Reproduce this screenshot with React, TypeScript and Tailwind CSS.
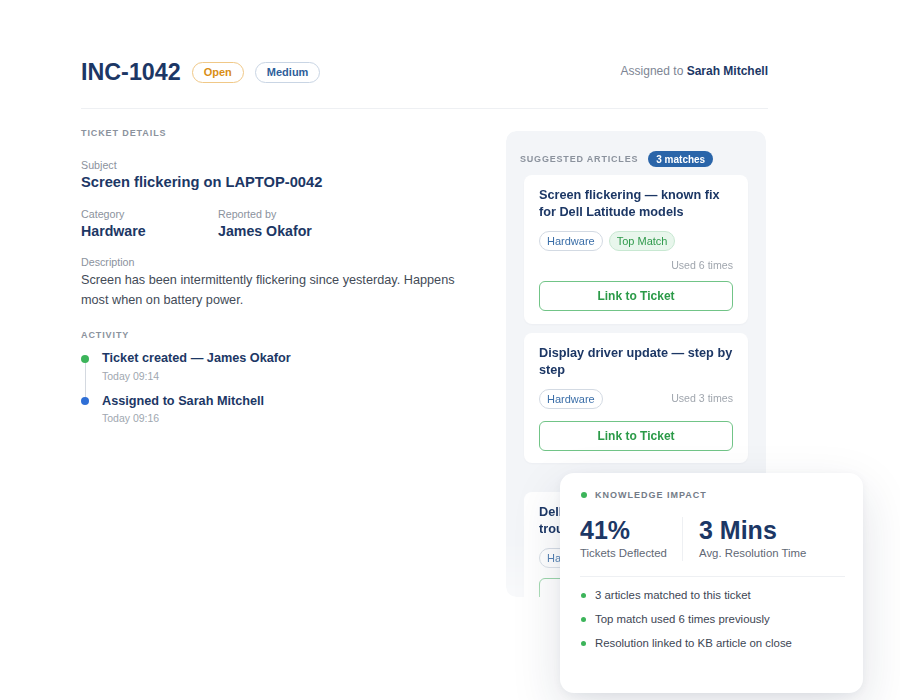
import React from "react";

const NAVY = "text-[#1c3765]";

function Label({ children }: { children: React.ReactNode }) {
  return <div className="text-[10.7px] leading-[14px] text-[#8b929d]">{children}</div>;
}

function Tag({ children, green }: { children: React.ReactNode; green?: boolean }) {
  return (
    <span
      className={
        "inline-flex h-[20px] items-center rounded-full border px-[7px] text-[11px] " +
        (green
          ? "border-[#c8e8d2] bg-[#e8f6ec] text-[#2f9a4c]"
          : "border-[#d3dae3] bg-white text-[#3a6ea8]")
      }
    >
      {children}
    </span>
  );
}

function LinkButton() {
  return (
    <div className="flex h-[30px] items-center justify-center rounded-[6px] border border-[#71c487] text-[12px] font-bold text-[#2b9a48]">
      Link to Ticket
    </div>
  );
}

export default function App() {
  return (
    <div
      className="relative h-[700px] w-[900px] overflow-hidden bg-white"
      style={{ fontFamily: '"Liberation Sans", Arial, Helvetica, sans-serif' }}
    >
      <div className="relative ml-[81px] w-[687px] pt-[58px]">
        {/* Header */}
        <div className="flex h-[29px] items-center justify-between">
          <div className="flex items-center gap-[11px]">
            <div className={"text-[23.3px] font-bold leading-[29px] " + NAVY}>INC-1042</div>
            <span className="inline-flex h-[21px] items-center rounded-full border border-[#f0c887] px-[11px] text-[11px] font-bold text-[#d98e14]">
              Open
            </span>
            <span className="inline-flex h-[21px] items-center rounded-full border border-[#c9d5e4] px-[11px] text-[11px] font-bold text-[#2d5e9a]">
              Medium
            </span>
          </div>
          <div className="mb-[4px] text-[12px] text-[#7d8594]">
            Assigned to <span className={"font-bold " + NAVY}>Sarah Mitchell</span>
          </div>
        </div>
        <div className="mt-[21px] border-t border-[#eef0f3]" />

        {/* Body */}
        <div className="flex gap-[34px]">
          <div className="flex-1 pt-[18px]">
            <div className="text-[9px] font-bold uppercase leading-[12px] tracking-[0.1em] text-[#8b929d]">
              Ticket Details
            </div>
            <div className="mt-[19px]">
              <Label>Subject</Label>
              <div className={"text-[14.7px] font-bold leading-[20px] " + NAVY}>
                Screen flickering on LAPTOP-0042
              </div>
            </div>
            <div className="mt-[15px] flex">
              <div className="w-[137px]">
                <Label>Category</Label>
                <div className={"text-[14.2px] font-bold leading-[20px] " + NAVY}>Hardware</div>
              </div>
              <div>
                <Label>Reported by</Label>
                <div className={"text-[14.2px] font-bold leading-[20px] " + NAVY}>James Okafor</div>
              </div>
            </div>
            <div className="mt-[14px]">
              <Label>Description</Label>
              <div className="mt-[1px] text-[12.7px] leading-[20px] text-[#434b57]">
                Screen has been intermittently flickering since yesterday. Happens most when on battery power.
              </div>
            </div>
            <div className="mt-[19px] text-[9px] font-bold uppercase leading-[12px] tracking-[0.1em] text-[#8b929d]">
              Activity
            </div>
            <div className="relative mt-[9px] flex flex-col gap-[10px]">
              <div className="absolute left-[3.5px] top-[12px] h-[40px] w-[1px] bg-[#d4d9e0]" />
              <div className="flex gap-[13px]">
                <div className="relative z-10 mt-[4.5px] h-[8px] w-[8px] rounded-full bg-[#3cb45a]" />
                <div>
                  <div className={"text-[12.7px] font-bold leading-[17px] " + NAVY}>Ticket created — James Okafor</div>
                  <div className="mt-[1.5px] text-[10.5px] leading-[14px] text-[#a0a7b0]">Today 09:14</div>
                </div>
              </div>
              <div className="flex gap-[13px]">
                <div className="relative z-10 mt-[4.5px] h-[8px] w-[8px] rounded-full bg-[#2f6fd6]" />
                <div>
                  <div className={"text-[12.7px] font-bold leading-[17px] " + NAVY}>Assigned to Sarah Mitchell</div>
                  <div className="mt-[1.5px] text-[10.5px] leading-[14px] text-[#a0a7b0]">Today 09:16</div>
                </div>
              </div>
            </div>
          </div>

          {/* Suggested articles panel */}
          <div className="mr-[2px] mt-[22px] h-[466px] w-[260px] shrink-0 overflow-hidden rounded-[10px] bg-[#f3f5f8] [mask-image:linear-gradient(to_bottom,black_88%,rgba(0,0,0,0.55))]">
            <div className="flex items-center gap-[10px] pl-[14px] pt-[20px]">
              <div className="text-[9px] font-bold uppercase leading-[12px] tracking-[0.09em] text-[#8b929d]">
                Suggested Articles
              </div>
              <span className="inline-flex h-[16px] items-center rounded-full bg-[#2a65a9] px-[8px] text-[10px] font-bold text-white">
                3 matches
              </span>
            </div>
            <div className="mt-[8px] flex flex-col px-[18px]">
              <div className="rounded-[8px] bg-white px-[15px] pb-[13px] pt-[12px] shadow-[0_1px_2px_rgba(15,30,60,0.03)]">
                <div className={"text-[12.7px] font-bold leading-[17px] " + NAVY}>
                  Screen flickering — known fix for Dell Latitude models
                </div>
                <div className="mt-[10px] flex gap-[6px]">
                  <Tag>Hardware</Tag>
                  <Tag green>Top Match</Tag>
                </div>
                <div className="mt-[7px] text-right text-[10.6px] leading-[14px] text-[#a0a6ae]">Used 6 times</div>
                <div className="mt-[9px]">
                  <LinkButton />
                </div>
              </div>
              <div className="mt-[9px] rounded-[8px] bg-white px-[15px] pb-[12px] pt-[12px] shadow-[0_1px_2px_rgba(15,30,60,0.03)]">
                <div className={"text-[12.7px] font-bold leading-[17px] " + NAVY}>
                  Display driver update — step by step
                </div>
                <div className="mt-[10px] flex items-center justify-between">
                  <Tag>Hardware</Tag>
                  <span className="text-[10.6px] text-[#a0a6ae]">Used 3 times</span>
                </div>
                <div className="mt-[12px]">
                  <LinkButton />
                </div>
              </div>
              <div className="mt-[29px] rounded-[8px] bg-white px-[15px] pb-[12px] pt-[12px]">
                <div className={"text-[12.7px] font-bold leading-[17px] " + NAVY}>
                  Dell display flicker troubleshooting guide
                </div>
                <div className="mt-[10px] flex items-center justify-between">
                  <Tag>Hardware</Tag>
                  <span className="text-[10.6px] text-[#a0a6ae]">Used 2 times</span>
                </div>
                <div className="mt-[10px]">
                  <LinkButton />
                </div>
              </div>
            </div>
          </div>
        </div>

        {/* Knowledge impact overlay */}
        <div className="absolute left-[479px] top-[473px] h-[220px] w-[303px] rounded-[14px] bg-white px-[20px] pt-[15px] shadow-[0_18px_50px_rgba(20,35,70,0.13),0_2px_8px_rgba(20,35,70,0.05)]">
          <div className="flex items-center gap-[8px] pl-[1px]">
            <span className="h-[6px] w-[6px] rounded-full bg-[#3cb45a]" />
            <span className="text-[9px] font-bold uppercase leading-[14px] tracking-[0.11em] text-[#737b87]">
              Knowledge Impact
            </span>
          </div>
          <div className="mt-[15px] flex">
            <div className="w-[103px] border-r border-[#eef0f3]">
              <div className={"text-[25px] font-bold leading-[26px] " + NAVY}>41%</div>
              <div className="mt-[2px] text-[11.4px] leading-[16px] text-[#5f6875]">Tickets Deflected</div>
            </div>
            <div className="pl-[16px]">
              <div className={"text-[25px] font-bold leading-[26px] " + NAVY}>3 Mins</div>
              <div className="mt-[2px] text-[11.4px] leading-[16px] text-[#5f6875]">Avg. Resolution Time</div>
            </div>
          </div>
          <div className="mr-[-2px] mt-[15px] border-t border-[#eef0f3]" />
          <div className="mt-[10px] flex flex-col gap-[8px]">
            {[
              "3 articles matched to this ticket",
              "Top match used 6 times previously",
              "Resolution linked to KB article on close",
            ].map((t) => (
              <div key={t} className="flex items-center gap-[9px] pl-[1px]">
                <span className="h-[5px] w-[5px] rounded-full bg-[#3cb45a]" />
                <span className="text-[11.4px] leading-[16px] text-[#3d4654]">{t}</span>
              </div>
            ))}
          </div>
        </div>
      </div>
    </div>
  );
}
